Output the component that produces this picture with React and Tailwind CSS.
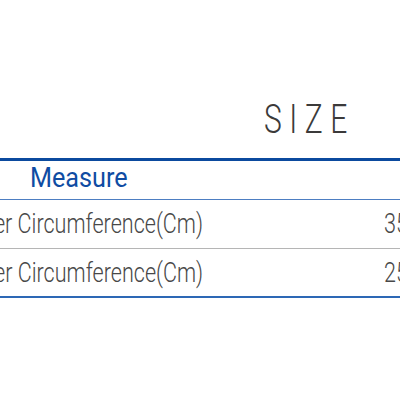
export default function App() {
  const rows = [
    { name: "Upper Circumference(Cm)", sizes: ["35", "40", "45"] },
    { name: "Lower Circumference(Cm)", sizes: ["25", "30", "35"] },
  ];

  return (
    <div className="w-[400px] h-[400px] overflow-hidden bg-white font-['Roboto',sans-serif]">
      <div className="pt-[100px] pl-[264px]">
        <h2 className="inline-block origin-left scale-x-[0.75] whitespace-nowrap text-[40px] leading-[40px] font-light tracking-[10px] text-[#3b3a3a]">
          SIZE
        </h2>
      </div>

      <div className="mt-[18px] w-[600px]">
        <div className="flex h-[42px] border-t-[3px] border-b border-t-[#0b4a9e] border-b-[#4d7ec2]">
          <div className="pl-[30px] pt-[3px] text-[28px] leading-[28px] text-[#0f4ca3]">
            <span className="inline-block origin-left scale-x-[0.9]">Measure</span>
          </div>
        </div>

        {rows.map((row, i) => (
          <div
            key={i}
            className={
              "flex h-[49px] items-center text-[28px] leading-[28px] font-light text-[#484848] " +
              (i === rows.length - 1 ? "border-b-2 border-[#2d68b5]" : "border-b border-[#b5b5b5]")
            }
          >
            <div className="w-[203px] flex justify-end whitespace-nowrap">
              <span className="inline-block origin-right scale-x-[0.77]">{row.name}</span>
            </div>
            <div className="flex">
              {row.sizes.map((s) => (
                <span key={s} className="ml-[181px] w-[80px]">
                  <span className="inline-block origin-left scale-x-[0.77]">{s}</span>
                </span>
              ))}
            </div>
          </div>
        ))}
      </div>
    </div>
  );
}
